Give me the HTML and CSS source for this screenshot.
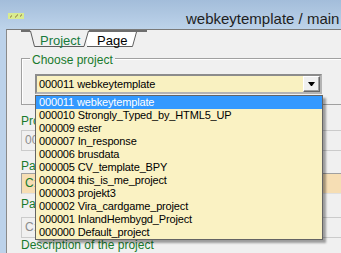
FILE: index.html
```html
<!DOCTYPE html>
<html>
<head>
  <title>webkeytemplate / main</title>
  <link rel="stylesheet" href="styles.css">
</head>
<body>

  <div class="titlebar">
    <svg class="app-icon" width="16" height="6" viewBox="0 0 16 6">
      <rect width="16" height="6" fill="#d9ec8f"/>
      <path d="M2 4h1M3 3h1M7 4h1M8 3h1M9 2h1M12 3h1M13 2h1" stroke="#8a6a3a" stroke-width="1"/>
    </svg>
    <span class="title">webkeytemplate / main</span>
  </div>

  <div class="frame">
    <div class="client">

      <!-- tab set hanging under the top edge -->
      <svg class="tabs" width="130" height="18" viewBox="0 0 130 18">
        <rect x="0" y="0" width="10" height="2" fill="#6e6e6e"/>
        <rect x="67" y="0" width="59" height="2" fill="#6e6e6e"/>
        <polygon points="63,2 67,17 112,17 116,2" fill="#fff"/>
        <path d="M115.5 2 L111.5 16.5 L66 16.5" fill="none" stroke="#5e5e5e"/>
        <polygon points="9,0 13,17 63,17 68,0" fill="#f0f0f0"/>
        <path d="M9.5 1 L13.5 16.5 L63 16.5 L67.5 1" fill="none" stroke="#5e5e5e"/>
        <text x="19" y="15" class="tab-text tab-active">Project</text>
        <text x="76" y="15" class="tab-text">Page</text>
      </svg>

      <div class="group">
        <div class="group-caption">Choose project</div>
        <div class="combo">
          <div class="combo-text">000011 webkeytemplate</div>
          <div class="combo-button"><span class="arrow"></span></div>

          <ul class="combo-list">
            <li class="selected">000011 webkeytemplate</li>
            <li>000010 Strongly_Typed_by_HTML5_UP</li>
            <li>000009 ester</li>
            <li>000007 In_response</li>
            <li>000006 brusdata</li>
            <li>000005 CV_template_BPY</li>
            <li>000004 this_is_me_project</li>
            <li>000003 projekt3</li>
            <li>000002 Vira_cardgame_project</li>
            <li>000001 InlandHembygd_Project</li>
            <li>000000 Default_project</li>
          </ul>
        </div>
      </div>

      <div class="label label-number">Project number</div>
      <div class="field field-disabled field-number">000011</div>

      <div class="label label-path">Path to project</div>
      <div class="field field-path">C:\webkey\webkeytemplate</div>

      <div class="label label-pages">Path to pages</div>
      <div class="field field-disabled field-pages">C:\webkey\webkeytemplate\pages</div>

      <div class="label">Description of the project</div>

    </div>
  </div>

</body>
</html>
```

FILE: styles.css
```css
body {
  margin: 0;
  width: 341px;
  height: 253px;
  overflow: hidden;
  font-family: "Liberation Sans", Arial, sans-serif;
  background: #bcd2ea;
}

.titlebar {
  height: 29px;
  display: flex;
  align-items: flex-start;
  background: linear-gradient(#a3bdda, #bdd3ea);
}

.app-icon {
  display: block;
  margin: 13px 0 0 8px;
}

.title {
  margin: 10px 0 0 162px;
  font-size: 15px;
  line-height: 17px;
  color: #1e1e1e;
  white-space: nowrap;
}

.frame {
  display: flex;
  height: 224px;
  padding-left: 6px;
}

.client {
  flex: 1;
  background: #f0f0f0;
  border-top: 1px solid #7a7a7a;
  border-left: 1px solid #8a8a8a;
  padding-left: 14px;
  overflow: hidden;
}

.tabs {
  display: block;
}

.tab-text {
  font-family: "Liberation Sans", Arial, sans-serif;
  font-size: 13px;
  fill: #000;
}

.tab-active {
  fill: #187a3c;
}

/* group box */
.group {
  margin-top: 10px;
  width: 400px;
  border: 1px solid #a0a0a0;
  box-shadow: inset 1px 1px 0 #fff;
  padding: 0 0 10px 13px;
}

.group-caption {
  width: fit-content;
  margin: -6px 0 0 -5px;
  padding: 0 2px;
  background: #f0f0f0;
  font-size: 12px;
  line-height: 14px;
  color: #187a2c;
}

.combo {
  position: relative;
  display: flex;
  box-sizing: border-box;
  width: 287px;
  height: 20px;
  margin-top: 7px;
  border: 2px solid;
  border-color: #8c8c8c #b4b4b4 #b4b4b4 #8c8c8c;
  background: #f9f1c1;
}

.combo-text {
  padding-left: 2px;
  font-size: 11px;
  line-height: 16px;
  letter-spacing: -0.1px;
  white-space: nowrap;
}

.combo-button {
  margin-left: auto;
  box-sizing: border-box;
  width: 17px;
  height: 16px;
  display: flex;
  align-items: center;
  justify-content: center;
  background: #f0f0f0;
  border: 1px solid;
  border-color: #fff #696969 #696969 #fff;
  box-shadow: inset -1px -1px 0 #a0a0a0;
}

.arrow {
  width: 1px;
  height: 0;
  border-left: 3px solid transparent;
  border-right: 3px solid transparent;
  border-top: 4px solid #000;
}

/* open drop-down list */
.combo-list {
  position: absolute;
  left: -2px;
  top: 19px;
  z-index: 2;
  box-sizing: border-box;
  width: 288px;
  margin: 0;
  padding: 0;
  list-style: none;
  border: 1px solid #646464;
  background: #faf2c3;
  box-shadow: 3px 3px 2px rgba(0,0,0,0.35);
}

.combo-list li {
  padding-left: 3px;
  font-size: 11px;
  line-height: 13px;
  letter-spacing: -0.15px;
  white-space: nowrap;
  color: #000;
}

.combo-list li.selected {
  background: #3399ff;
  color: #fff;
}

/* fields under the group box */
.label {
  font-size: 12px;
  line-height: 14px;
  color: #187a2c;
  white-space: nowrap;
}

.label-number { margin-top: 9px; }
.label-path { margin-top: 8px; }
.label-pages { margin-top: 3px; }

.field {
  box-sizing: border-box;
  width: 400px;
  height: 21px;
  padding-left: 3px;
  border: 1px solid;
  font-size: 12px;
  line-height: 19px;
  white-space: nowrap;
}

.field-number { margin-top: 2px; }
.field-pages { margin-top: 6px; }

.field-disabled {
  background: #f0f0f0;
  border-color: #cbcbcb;
  color: #8d8d8d;
}

.field-path {
  background: #f6deb4;
  border-color: #a0a0a0 #e0e0e0 #e0e0e0 #a0a0a0;
  color: #187a2c;
}
```
